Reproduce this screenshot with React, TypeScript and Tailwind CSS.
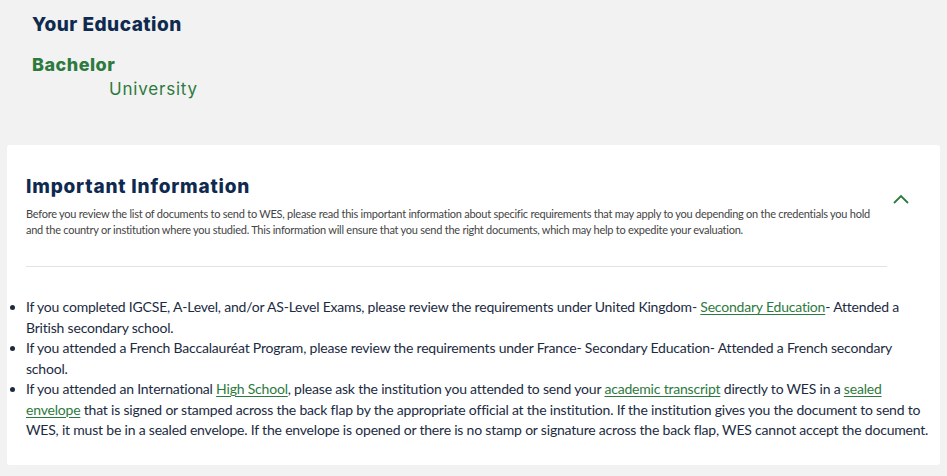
import React from "react";

const heading = { fontFamily: "Inter, 'DejaVu Sans', sans-serif" };

function A({ children }: { children: React.ReactNode }) {
  return (
    <a className="text-[#2d7a3e] underline decoration-1 underline-offset-2" href="#">
      {children}
    </a>
  );
}

export default function App() {
  return (
    <div className="w-[947px] h-[476px] bg-[#f2f2f2] overflow-hidden" style={{ fontFamily: "Lato, sans-serif" }}>
      <div className="pl-[32px] pt-[13px]">
        <h1 className="text-[19px] leading-[24px] font-extrabold text-[#0f2a4f] tracking-[0.5px]" style={heading}>
          Your Education
        </h1>
        <div className="mt-[16px] text-[18px] leading-[24px] font-extrabold text-[#2d7a3e] tracking-[0.5px]" style={heading}>
          Bachelor
        </div>
        <div className="pl-[77px] text-[17px] leading-[24px] text-[#2d7a3e] tracking-[0.8px]" style={heading}>
          University
        </div>
      </div>
      <div className="mx-[7px] mt-[44px] h-[320px] bg-white rounded-[3px] pl-[19px] pr-[5px] pt-[31px]">
        <div className="flex">
          <div className="w-[861px]">
            <h2 className="text-[19px] leading-[22px] font-extrabold text-[#0f2a4f] tracking-[0.8px]" style={heading}>
              Important Information
            </h2>
            <p className="mt-[8px] text-[11px] leading-[16px] text-[#444] tracking-[-0.25px]">
              Before you review the list of documents to send to WES, please read this important information about specific requirements that may apply to you depending on the credentials you hold and the country or institution where you studied. This information will ensure that you send the right documents, which may help to expedite your evaluation.
            </p>
            <div className="mt-[28px] border-t border-[#e2e2e2]" />
          </div>
          <div className="pl-[5px] pt-[17px]">
            <svg width="18" height="12" viewBox="0 0 18 12" fill="none">
              <path d="M2 10 L9 3 L16 10" stroke="#2d7a3e" strokeWidth="1.8" />
            </svg>
          </div>
        </div>
        <ul className="mt-[30px] list-disc text-[14px] leading-[20.5px] text-[#1c2b3f] tracking-[-0.2px]" style={{ listStylePosition: "outside" }}>
          <li>
            If you completed IGCSE, A-Level, and/or AS-Level Exams, please review the requirements under United Kingdom- <A>Secondary Education</A>- Attended a British secondary school.
          </li>
          <li>
            If you attended a French Baccalauréat Program, please review the requirements under France- Secondary Education- Attended a French secondary school.
          </li>
          <li>
            If you attended an International <A>High School</A>, please ask the institution you attended to send your <A>academic transcript</A> directly to WES in a <A>sealed envelope</A> that is signed or stamped across the back flap by the appropriate official at the institution. If the institution gives you the document to send to WES, it must be in a sealed envelope. If the envelope is opened or there is no stamp or signature across the back flap, WES cannot accept the document.
          </li>
        </ul>
      </div>
    </div>
  );
}
